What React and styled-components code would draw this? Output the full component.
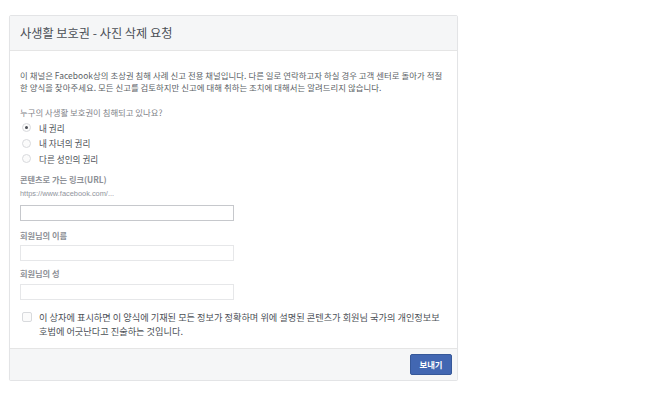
import React from 'react';
import styled, { createGlobalStyle } from 'styled-components';

const GlobalStyle = createGlobalStyle`
  html, body {
    margin: 0;
    padding: 0;
    background: #fff;
  }
  body {
    font-family: "Noto Sans CJK KR", "Liberation Sans", sans-serif;
    -webkit-font-smoothing: antialiased;
  }
`;

const Page = styled.div`
  padding: 15px 0 0 9px;
`;

const Card = styled.div`
  width: 447px;
  border: 1px solid #e3e4e6;
  border-radius: 2px;
  background: #fff;
  box-shadow: 0 1px 1px rgba(0, 0, 0, 0.04);
`;

const Header = styled.div`
  height: 34px;
  display: flex;
  align-items: center;
  padding: 0 10px;
  background: #f5f6f7;
  border-bottom: 1px solid #e5e5e5;
  font-size: 12.2px;
  color: #4b4f56;
`;

const Body = styled.div`
  padding: 18px 10px 10px;
  display: flex;
  flex-direction: column;
`;

const Intro = styled.p`
  margin: 0 0 14px;
  font-size: 8.4px;
  line-height: 12px;
  letter-spacing: 0.05px;
  color: #5b5f66;
`;

const Question = styled.div`
  font-size: 8.4px;
  line-height: 10px;
  color: #7f8389;
  margin-bottom: 3px;
`;

const RadioRow = styled.label`
  display: flex;
  align-items: center;
  gap: 8px;
  height: 15.5px;
  padding-left: 2px;
  font-size: 8.6px;
  color: #4b4f56;
`;

const RadioDot = styled.span`
  width: 7px;
  height: 7px;
  border-radius: 50%;
  border: 1px solid #d8dadd;
  background: #fbfbfb;
  display: flex;
  align-items: center;
  justify-content: center;
  &::after {
    content: '';
    width: 3px;
    height: 3px;
    border-radius: 50%;
    background: ${p => (p.checked ? '#4b4f56' : 'transparent')};
  }
`;

const FieldLabel = styled.div`
  font-size: 8.2px;
  line-height: 10px;
  font-weight: bold;
  color: #8d9096;
  margin-top: ${p => p.top || 9}px;
`;

const Hint = styled.div`
  font-size: 7.4px;
  line-height: 10px;
  color: #90949c;
  font-family: "Liberation Sans", sans-serif;
  margin-top: 5px;
`;

const Input = styled.div`
  width: 212px;
  height: 14px;
  border: 1px solid ${p => (p.dark ? '#c6c8cc' : '#e6e7e9')};
  background: #fff;
  margin-top: ${p => p.top || 5}px;
`;

const CheckRow = styled.div`
  display: flex;
  gap: 7px;
  margin-top: 10px;
  padding-left: 2px;
`;

const Box = styled.span`
  flex: none;
  width: 8px;
  height: 8px;
  margin-top: 2px;
  border: 1px solid #d8dadd;
  border-radius: 2px;
  background: #fbfbfb;
`;

const CheckText = styled.div`
  font-size: 9.2px;
  line-height: 14px;
  color: #4b4f56;
`;

const Footer = styled.div`
  height: 31px;
  background: #f5f6f7;
  border-top: 1px solid #e5e5e5;
  display: flex;
  align-items: center;
  justify-content: flex-end;
  padding: 0 5px;
`;

const Button = styled.button`
  width: 42px;
  height: 21px;
  padding: 0;
  border: 1px solid #365899;
  border-radius: 2px;
  background: #4267b2;
  color: #fff;
  font-family: inherit;
  font-size: 8.4px;
  font-weight: bold;
`;

const radios = [
  { label: '내 권리', checked: true },
  { label: '내 자녀의 권리' },
  { label: '다른 성인의 권리' },
];

export default function App() {
  return (
    <>
      <GlobalStyle />
      <Page>
        <Card>
          <Header>사생활 보호권 - 사진 삭제 요청</Header>
          <Body>
            <Intro>
              이 채널은 Facebook상의 초상권 침해 사례 신고 전용 채널입니다. 다른 일로 연락하고자 하실 경우 고객 센터로 돌아가 적절한 양식을 찾아주세요. 모든 신고를 검토하지만 신고에 대해 취하는 조치에 대해서는 알려드리지 않습니다.
            </Intro>
            <Question>누구의 사생활 보호권이 침해되고 있나요?</Question>
            {radios.map(r => (
              <RadioRow key={r.label}>
                <RadioDot checked={r.checked} />
                {r.label}
              </RadioRow>
            ))}
            <FieldLabel top={7}>콘텐츠로 가는 링크(URL)</FieldLabel>
            <Hint>https://www.facebook.com/...</Hint>
            <Input dark top={6} />
            <FieldLabel>회원님의 이름</FieldLabel>
            <Input />
            <FieldLabel top={7}>회원님의 성</FieldLabel>
            <Input top={6} />
            <CheckRow>
              <Box />
              <CheckText>
                이 상자에 표시하면 이 양식에 기재된 모든 정보가 정확하며 위에 설명된 콘텐츠가 회원님 국가의 개인정보보호법에 어긋난다고 진술하는 것입니다.
              </CheckText>
            </CheckRow>
          </Body>
          <Footer>
            <Button>보내기</Button>
          </Footer>
        </Card>
      </Page>
    </>
  );
}
